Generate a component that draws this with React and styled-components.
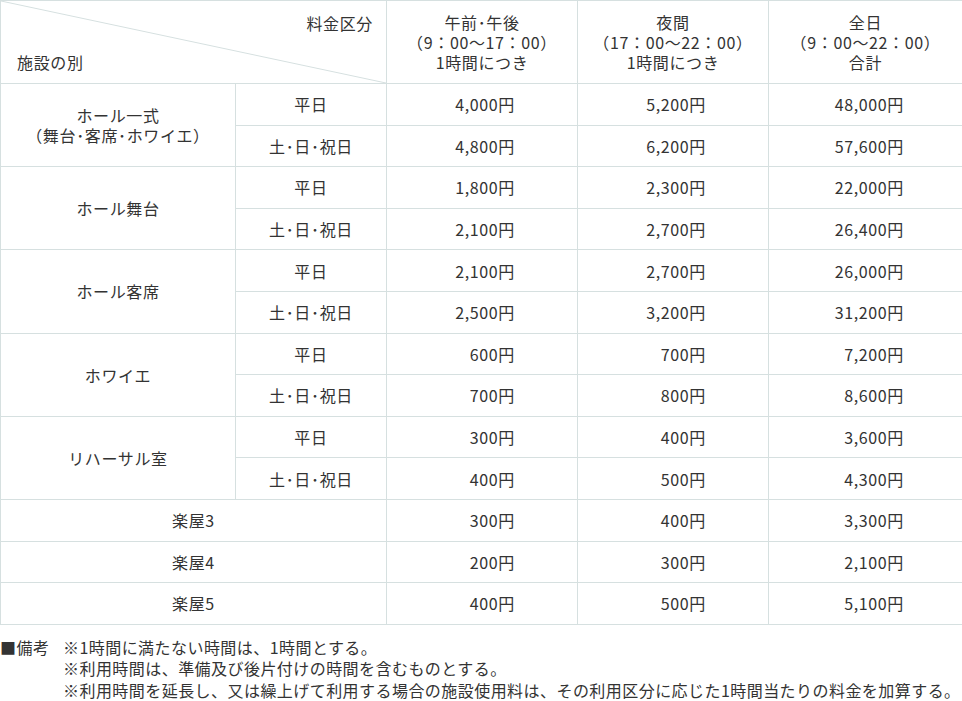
import React from "react";
import styled, { createGlobalStyle } from "styled-components";

const Global = createGlobalStyle`
  html, body { margin: 0; padding: 0; background: #fff; }
  body {
    font-family: "Noto Sans CJK JP", "Noto Sans", sans-serif;
    color: #333;
    font-size: 16px;
  }
`;

const Page = styled.div`
  width: 962px;
`;

const Table = styled.table`
  width: 962px;
  border-collapse: collapse;
  table-layout: fixed;
  font-size: 16px;
  letter-spacing: 0.04em;
  color: #333;
`;

const Th = styled.th`
  border: 1px solid #d6e0e0;
  font-weight: 400;
  text-align: center;
  vertical-align: middle;
  line-height: 20px;
  padding: 0;
  height: 82px;
`;

const HeadLine = styled.div`
  line-height: 20px;
`;

const CornerCell = styled(Th)`
  position: relative;
  text-align: left;
`;

const Diagonal = styled.svg`
  position: absolute;
  left: 0;
  top: 0;
  width: 100%;
  height: 100%;
  pointer-events: none;
`;

const CornerTop = styled.div`
  position: absolute;
  right: 13px;
  top: 12px;
`;

const CornerBottom = styled.div`
  position: absolute;
  left: 16px;
  bottom: 11px;
`;

const Row = styled.tr`
  height: 41.6px;
`;

const Td = styled.td`
  border: 1px solid #d6e0e0;
  padding: 0;
  text-align: ${(p) => (p.$right ? "right" : "center")};
  padding-right: ${(p) => (p.$pad ? `${p.$pad}px` : "0")};
  vertical-align: middle;
  line-height: 20px;
`;

const Notes = styled.div`
  display: grid;
  grid-template-columns: 63px 1fr;
  margin-top: 12px;
  font-size: 16px;
  letter-spacing: 0.028em;
  line-height: 21.5px;
  color: #333;
`;

const NoteLabel = styled.div`
  white-space: nowrap;
`;

const NoteList = styled.div`
  display: flex;
  flex-direction: column;
  white-space: nowrap;
`;

const groups = [
  {
    name: ["ホール一式", "（舞台･客席･ホワイエ）"],
    rows: [
      ["4,000円", "5,200円", "48,000円"],
      ["4,800円", "6,200円", "57,600円"],
    ],
  },
  {
    name: ["ホール舞台"],
    rows: [
      ["1,800円", "2,300円", "22,000円"],
      ["2,100円", "2,700円", "26,400円"],
    ],
  },
  {
    name: ["ホール客席"],
    rows: [
      ["2,100円", "2,700円", "26,000円"],
      ["2,500円", "3,200円", "31,200円"],
    ],
  },
  {
    name: ["ホワイエ"],
    rows: [
      ["600円", "700円", "7,200円"],
      ["700円", "800円", "8,600円"],
    ],
  },
  {
    name: ["リハーサル室"],
    rows: [
      ["300円", "400円", "3,600円"],
      ["400円", "500円", "4,300円"],
    ],
  },
];

const singles = [
  ["楽屋3", "300円", "400円", "3,300円"],
  ["楽屋4", "200円", "300円", "2,100円"],
  ["楽屋5", "400円", "500円", "5,100円"],
];

const headers = [
  ["午前･午後", "（9：00〜17：00）", "1時間につき"],
  ["夜間", "（17：00〜22：00）", "1時間につき"],
  ["全日", "（9：00〜22：00）", "合計"],
];

const dayLabels = ["平日", "土･日･祝日"];
const pads = [62, 62, 58];

function Values({ vals }) {
  return vals.map((v, i) => (
    <Td key={i} $right $pad={pads[i]}>
      {v}
    </Td>
  ));
}

export default function App() {
  return (
    <Page>
      <Global />
      <Table>
        <colgroup>
          <col style={{ width: 235 }} />
          <col style={{ width: 151 }} />
          <col style={{ width: 191 }} />
          <col style={{ width: 191 }} />
          <col style={{ width: 194 }} />
        </colgroup>
        <thead>
          <tr>
            <CornerCell colSpan={2}>
              <Diagonal viewBox="0 0 100 100" preserveAspectRatio="none">
                <line x1="0" y1="0" x2="100" y2="100" stroke="#d6e0e0" strokeWidth="1" vectorEffect="non-scaling-stroke" />
              </Diagonal>
              <CornerTop>料金区分</CornerTop>
              <CornerBottom>施設の別</CornerBottom>
            </CornerCell>
            {headers.map((lines) => (
              <Th key={lines[0]}>
                {lines.map((l) => (
                  <HeadLine key={l}>{l}</HeadLine>
                ))}
              </Th>
            ))}
          </tr>
        </thead>
        <tbody>
          {groups.map((g) =>
            g.rows.map((vals, ri) => (
              <Row key={g.name[0] + ri}>
                {ri === 0 && (
                  <Td rowSpan={2}>
                    {g.name.map((n) => (
                      <HeadLine key={n}>{n}</HeadLine>
                    ))}
                  </Td>
                )}
                <Td>{dayLabels[ri]}</Td>
                <Values vals={vals} />
              </Row>
            ))
          )}
          {singles.map(([name, ...vals]) => (
            <Row key={name}>
              <Td colSpan={2}>{name}</Td>
              <Values vals={vals} />
            </Row>
          ))}
        </tbody>
      </Table>
      <Notes>
        <NoteLabel>■備考</NoteLabel>
        <NoteList>
          <div>※1時間に満たない時間は、1時間とする。</div>
          <div>※利用時間は、準備及び後片付けの時間を含むものとする。</div>
          <div>※利用時間を延長し、又は繰上げて利用する場合の施設使用料は、その利用区分に応じた1時間当たりの料金を加算する。</div>
        </NoteList>
      </Notes>
    </Page>
  );
}
